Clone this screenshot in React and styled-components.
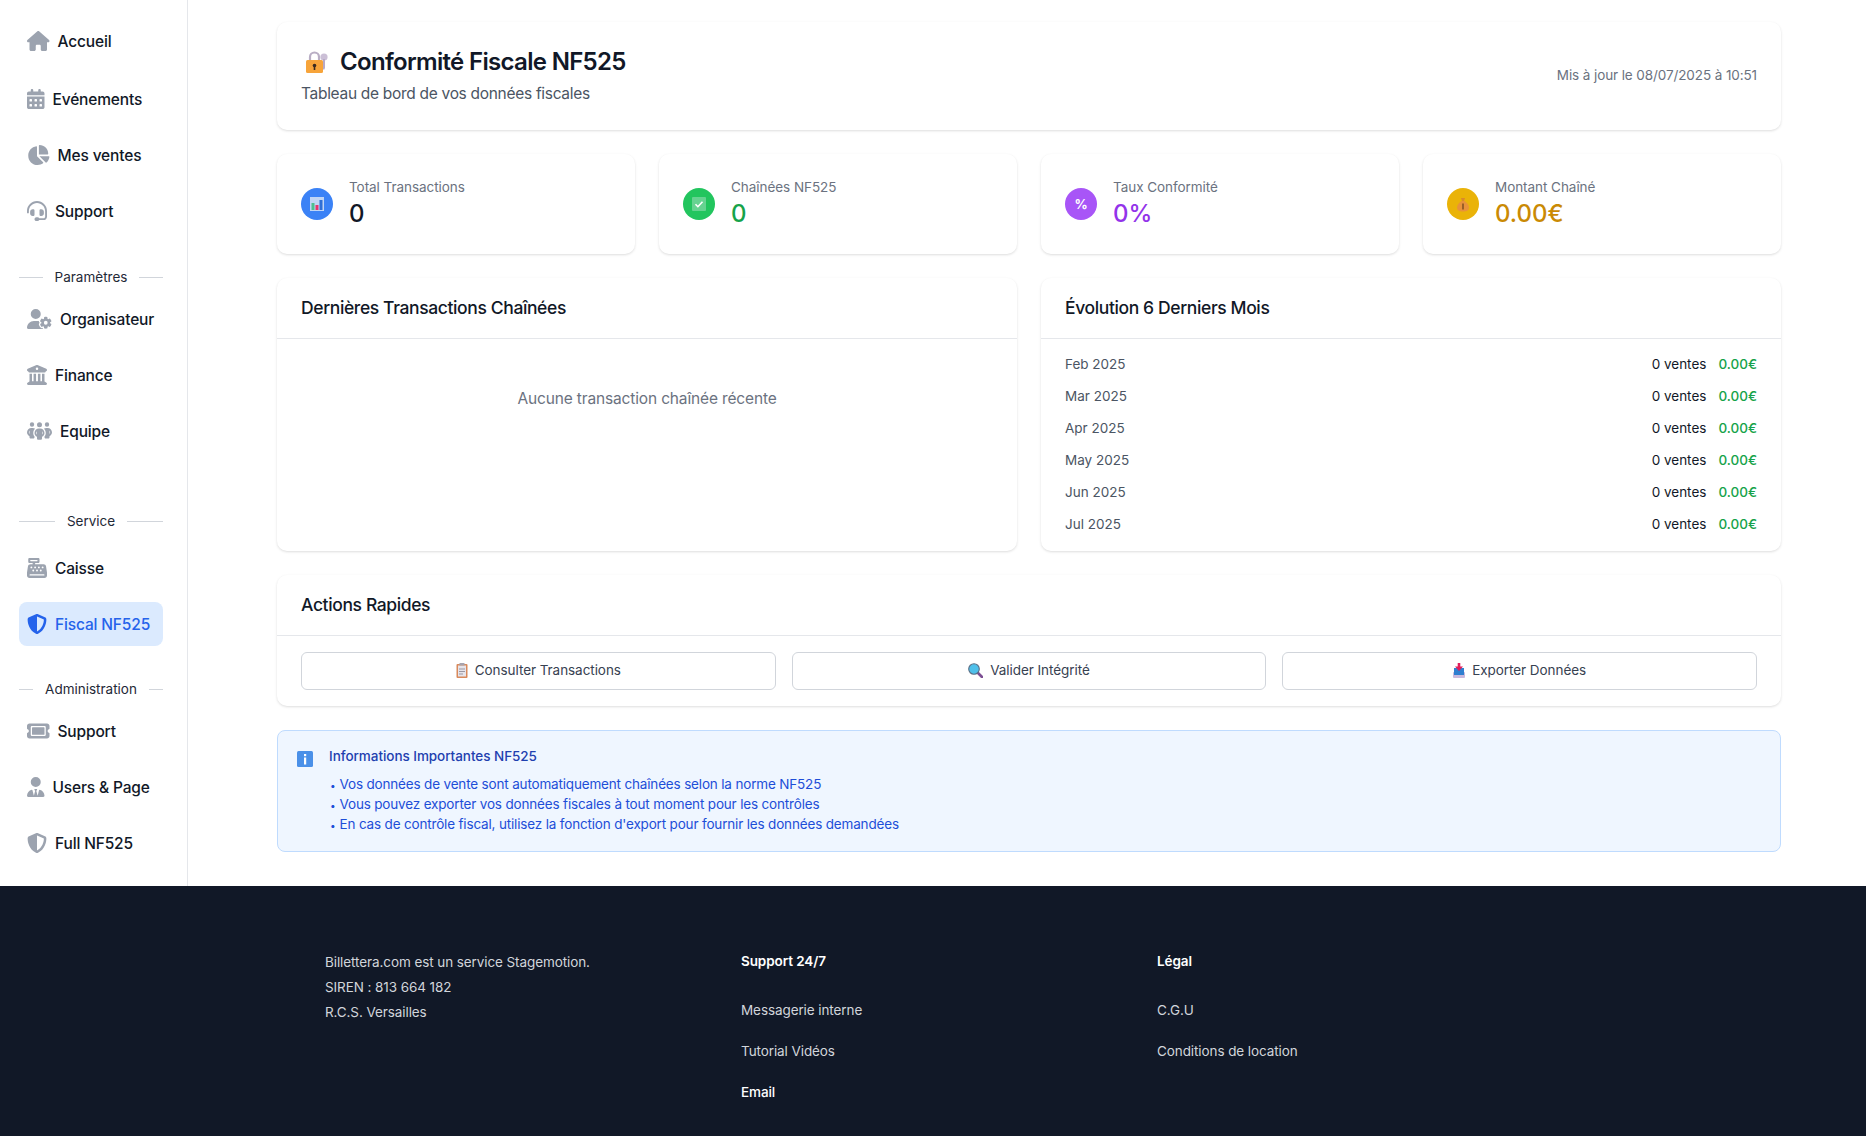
import React from 'react';
import styled, { createGlobalStyle } from 'styled-components';
import {
  FaHouse, FaCalendarDays, FaChartPie, FaHeadset, FaUserGear, FaBuildingColumns, FaPeopleGroup,
  FaCashRegister, FaShieldHalved, FaTicket, FaUserTie,
} from 'react-icons/fa6';

const Global = createGlobalStyle`
  html, body { margin: 0; padding: 0; background: #fff; }
  body { font-family: "Inter", "Noto Sans", sans-serif; color: #111827; }
  * { box-sizing: border-box; }
`;

const Page = styled.div`display: flex; flex-direction: column; min-height: 1136px;`;
const Top = styled.div`display: flex; height: 886px;`;
const Sidebar = styled.aside`
  width: 188px; flex: none; padding: 19px 24px 0 19px; border-right: 1px solid #e5e7eb; background: #fff;
`;
const NavItem = styled.a`
  display: flex; align-items: center; height: 44px; padding: 0 8px; border-radius: 8px;
  margin-bottom: ${p => p.$mb ?? 12}px; font-size: 15.5px; font-weight: 500; letter-spacing: -0.15px;
  color: ${p => p.$active ? '#2563eb' : '#111827'};
  background: ${p => p.$active ? '#dbeafe' : 'transparent'};
`;
const NavIcon = styled.span`
  display: flex; flex: none; width: ${p => p.$w}px; height: 20px; margin-right: 8px;
  color: ${p => p.$active ? '#2563eb' : '#9ca3af'};
  svg { width: 100%; height: 100%; }
`;
const Divider = styled.div`
  display: flex; align-items: center; gap: 12px; font-size: 13.5px; color: #1f2937; height: 20px;
  margin: ${p => p.$m};
  &::before, &::after { content: ''; flex: 1; height: 1px; background: #d1d5db; }
`;
const Main = styled.main`flex: 1; padding: 22px 85px 0 89px; display: flex; flex-direction: column; gap: 24px;`;
const Card = styled.section`
  background: #fff; border-radius: 10px;
  box-shadow: 0 1px 3px rgba(0,0,0,.1), 0 1px 2px rgba(0,0,0,.04);
`;
const HeaderCard = styled(Card)`
  height: 108px; flex: none; display: flex; align-items: center; justify-content: space-between; padding: 0 24px;
`;
const HeaderText = styled.div`padding-bottom: 1px;`;
const TitleRow = styled.h1`
  margin: 0 0 5px; display: flex; align-items: center; gap: 10px; font-size: 24px; font-weight: 600; line-height: 32px; color: #111827;
  letter-spacing: -0.68px;
  svg { margin-left: 3px; }
`;
const Sub = styled.p`margin: 0; font-size: 15.5px; line-height: 22px; color: #4b5563; letter-spacing: -0.3px;`;
const Updated = styled.div`font-size: 13.5px; color: #6b7280; letter-spacing: -0.1px; margin-bottom: 2px;`;
const Stats = styled.div`display: grid; grid-template-columns: repeat(4, 1fr); gap: 24px;`;
const StatCard = styled(Card)`height: 100px; display: flex; align-items: center; padding: 0 24px; gap: 16px;`;
const Round = styled.div`
  width: 32px; height: 32px; border-radius: 50%; background: ${p => p.$c}; flex: none;
  display: flex; align-items: center; justify-content: center; color: #fff; font-size: 13px; font-weight: 700;
`;
const StatLabel = styled.div`font-size: 13.5px; line-height: 20px; color: #6b7280; letter-spacing: -0.05px;`;
const StatValue = styled.div`font-size: 24px; line-height: 34px; font-weight: 500; color: ${p => p.$c};`;
const Panels = styled.div`display: grid; grid-template-columns: 1fr 1fr; gap: 24px;`;
const Panel = styled(Card)`height: ${p => p.$h}px;`;
const PanelHead = styled.h2`
  margin: 0; height: 61px; padding: 0 24px 1px; display: flex; align-items: center; font-size: 17.5px; font-weight: 500;
  border-bottom: 1px solid #e5e7eb; color: #111827; letter-spacing: -0.38px;
`;
const Empty = styled.div`padding-top: 48px; text-align: center; font-size: 15.5px; line-height: 24px; color: #6b7280; letter-spacing: -0.15px;`;
const Rows = styled.div`padding: 9px 24px 0;`;
const Row = styled.div`display: flex; align-items: center; height: 32px; font-size: 13.5px;`;
const Month = styled.span`flex: 1; color: #4b5563;`;
const Sales = styled.span`color: #111827; margin-right: 12px;`;
const Amount = styled.span`color: #16a34a; font-weight: 500;`;
const Actions = styled.div`display: grid; grid-template-columns: repeat(3, 1fr); gap: 16px; padding: 16px 24px;`;
const Btn = styled.button`
  height: 38px; border: 1px solid #d1d5db; border-radius: 6px; background: #fff; font: inherit; font-size: 13.5px; color: #374151;
  letter-spacing: -0.06px; display: flex; align-items: center; justify-content: center; gap: 7px; padding: 0 0 2px;
`;
const Info = styled.section`
  height: 122px; border: 1px solid #bfdbfe; background: #eff6ff; border-radius: 8px; padding: 15px 19px;
  display: flex; gap: 16px;
`;
const InfoTitle = styled.div`font-size: 13.5px; line-height: 20px; font-weight: 500; color: #1e40af; margin-bottom: 8px; letter-spacing: -0.05px;`;
const InfoLine = styled.div`display: flex; align-items: baseline; height: 20px; font-size: 13.5px; line-height: 20px; color: #1d4ed8; letter-spacing: -0.17px;`;
const Bullet = styled.span`flex: none; width: 10.5px; font-size: 10px; padding-left: 1px;`;
const Footer = styled.footer`
  height: 250px; background: #111827; padding: 63px 0 0 325px; display: grid; grid-template-columns: 416px 416px 416px; align-content: start;
  font-size: 13.5px; color: #d1d5db; letter-spacing: -0.09px;
`;
const Company = styled.div`padding-top: 1px;`;
const FootLine = styled.div`line-height: 25px;`;
const FootHead = styled.div`line-height: 25px; margin-bottom: 24px; color: #fff; font-weight: 600;`;
const FootLink = styled.div`line-height: 25px; margin-bottom: 16px; color: ${p => p.$strong ? '#fff' : '#d1d5db'}; font-weight: ${p => p.$strong ? 500 : 400};`;

const Lock = () => (
  <svg width="26" height="26" viewBox="0 0 26 26">
    <circle cx="20" cy="8" r="3.6" fill="#cbbfd6" />
    <path d="M19 10h2v9l-1 2-1-1z" fill="#b7a9c6" />
    <path d="M6 12V8a4.5 4.5 0 0 1 9 0v4" fill="none" stroke="#b9aec4" strokeWidth="2.2" />
    <rect x="2" y="11" width="17" height="13" rx="1.5" fill="#f7a43a" />
    <circle cx="10.5" cy="16.5" r="1.8" fill="#3a2a20" />
    <rect x="9.7" y="17" width="1.6" height="4" fill="#3a2a20" />
  </svg>
);
const ChartEmoji = () => (
  <svg width="14" height="14" viewBox="0 0 14 14">
    <rect width="14" height="14" fill="#eef0f4" opacity=".75" />
    <rect x="1.5" y="6" width="3" height="7" fill="#4fbf8f" />
    <rect x="5.5" y="8" width="3" height="5" fill="#e8336d" />
    <rect x="9.5" y="3" width="3" height="10" fill="#2f6fd6" />
  </svg>
);
const CheckEmoji = () => (
  <svg width="14" height="14" viewBox="0 0 14 14">
    <rect width="14" height="14" rx="1" fill="#66d391" />
    <path d="M3.5 7.3l2.4 2.4 4.6-5" fill="none" stroke="#fff" strokeWidth="1.6" />
  </svg>
);
const BagEmoji = () => (
  <svg width="14" height="15" viewBox="0 0 14 15">
    <path d="M5 1h4l-1 3H6z" fill="#d98a2b" />
    <path d="M5.5 4h3C11 6 13 8 13 10.5 13 13.5 10.5 14.5 7 14.5S1 13.5 1 10.5C1 8 3 6 5.5 4z" fill="#e8923a" />
    <rect x="6.3" y="6.5" width="1.4" height="6" fill="#7a4a1e" />
  </svg>
);
const ClipEmoji = () => (
  <svg width="12" height="15" viewBox="0 0 12 15">
    <rect x=".5" y="1" width="11" height="14" rx="1" fill="#d9895b" />
    <rect x="2" y="2.5" width="8" height="11" fill="#e6e4ea" />
    <rect x="3.5" y="0" width="5" height="2.5" fill="#a7a3ad" />
    <path d="M3 6h6M3 8.5h6M3 11h4" stroke="#9b97a3" strokeWidth="1" />
  </svg>
);
const GlassEmoji = () => (
  <svg width="15" height="15" viewBox="0 0 15 15">
    <path d="M9 9l5 5" stroke="#7c4f93" strokeWidth="2.6" strokeLinecap="round" />
    <circle cx="6" cy="6" r="5.3" fill="#4fc0ea" stroke="#5b6f86" strokeWidth="1.1" />
  </svg>
);
const TrayEmoji = () => (
  <svg width="12" height="15" viewBox="0 0 12 15">
    <rect x="0" y="9" width="12" height="6" rx="1" fill="#c9b9dd" />
    <rect x="1" y="5" width="10" height="7" fill="#2f7fd0" />
    <path d="M4.7 0h2.6v3.5H10L6 8 2 3.5h2.7z" fill="#e11d5b" />
  </svg>
);
const InfoEmojiSvg = styled.svg`flex: none; margin-top: 5px;`;
const InfoEmoji = () => (
  <InfoEmojiSvg width="16" height="16" viewBox="0 0 16 16">
    <rect width="16" height="16" rx="1.5" fill="#4a90e8" />
    <rect x="7" y="3" width="2.2" height="2.2" fill="#fff" />
    <rect x="7" y="6.5" width="2.2" height="7" fill="#fff" />
  </InfoEmojiSvg>
);

const Nav = ({ icon: Icon, w, active, mb, children }) => (
  <NavItem $active={active} $mb={mb}>
    <NavIcon $w={w} $active={active}><Icon /></NavIcon>
    {children}
  </NavItem>
);

const months = ['Feb 2025', 'Mar 2025', 'Apr 2025', 'May 2025', 'Jun 2025', 'Jul 2025'];

export default function App() {
  return (
    <Page>
      <Global />
      <Top>
        <Sidebar>
          <Nav icon={FaHouse} w={22.5} mb={14}>Accueil</Nav>
          <Nav icon={FaCalendarDays} w={17.5}>Evénements</Nav>
          <Nav icon={FaChartPie} w={22.5}>Mes ventes</Nav>
          <Nav icon={FaHeadset} w={20} mb={0}>Support</Nav>
          <Divider $m="34px 0 10px">Paramètres</Divider>
          <Nav icon={FaUserGear} w={25}>Organisateur</Nav>
          <Nav icon={FaBuildingColumns} w={20}>Finance</Nav>
          <Nav icon={FaPeopleGroup} w={25} mb={0}>Equipe</Nav>
          <Divider $m="58px 0 15px">Service</Divider>
          <Nav icon={FaCashRegister} w={20}>Caisse</Nav>
          <Nav icon={FaShieldHalved} w={20} active mb={0}>Fiscal NF525</Nav>
          <Divider $m="33px 0 10px">Administration</Divider>
          <Nav icon={FaTicket} w={22.5}>Support</Nav>
          <Nav icon={FaUserTie} w={17.5}>Users &amp; Page</Nav>
          <Nav icon={FaShieldHalved} w={20} mb={0}>Full NF525</Nav>
        </Sidebar>
        <Main>
          <HeaderCard>
            <HeaderText>
              <TitleRow><Lock />Conformité Fiscale NF525</TitleRow>
              <Sub>Tableau de bord de vos données fiscales</Sub>
            </HeaderText>
            <Updated>Mis à jour le 08/07/2025 à 10:51</Updated>
          </HeaderCard>
          <Stats>
            <StatCard>
              <Round $c="#3b82f6"><ChartEmoji /></Round>
              <div><StatLabel>Total Transactions</StatLabel><StatValue $c="#111827">0</StatValue></div>
            </StatCard>
            <StatCard>
              <Round $c="#22c55e"><CheckEmoji /></Round>
              <div><StatLabel>Chaînées NF525</StatLabel><StatValue $c="#16a34a">0</StatValue></div>
            </StatCard>
            <StatCard>
              <Round $c="#a855f7">%</Round>
              <div><StatLabel>Taux Conformité</StatLabel><StatValue $c="#9333ea">0%</StatValue></div>
            </StatCard>
            <StatCard>
              <Round $c="#eab308"><BagEmoji /></Round>
              <div><StatLabel>Montant Chaîné</StatLabel><StatValue $c="#ca8a04">0.00€</StatValue></div>
            </StatCard>
          </Stats>
          <Panels>
            <Panel $h={273}>
              <PanelHead>Dernières Transactions Chaînées</PanelHead>
              <Empty>Aucune transaction chaînée récente</Empty>
            </Panel>
            <Panel $h={273}>
              <PanelHead>Évolution 6 Derniers Mois</PanelHead>
              <Rows>
                {months.map(m => (
                  <Row key={m}><Month>{m}</Month><Sales>0 ventes</Sales><Amount>0.00€</Amount></Row>
                ))}
              </Rows>
            </Panel>
          </Panels>
          <Panel $h={131}>
            <PanelHead>Actions Rapides</PanelHead>
            <Actions>
              <Btn><ClipEmoji />Consulter Transactions</Btn>
              <Btn><GlassEmoji />Valider Intégrité</Btn>
              <Btn><TrayEmoji />Exporter Données</Btn>
            </Actions>
          </Panel>
          <Info>
            <InfoEmoji />
            <div>
              <InfoTitle>Informations Importantes NF525</InfoTitle>
              <InfoLine><Bullet>•</Bullet>Vos données de vente sont automatiquement chaînées selon la norme NF525</InfoLine>
              <InfoLine><Bullet>•</Bullet>Vous pouvez exporter vos données fiscales à tout moment pour les contrôles</InfoLine>
              <InfoLine><Bullet>•</Bullet>En cas de contrôle fiscal, utilisez la fonction d'export pour fournir les données demandées</InfoLine>
            </div>
          </Info>
        </Main>
      </Top>
      <Footer>
        <Company>
          <FootLine>Billettera.com est un service Stagemotion.</FootLine>
          <FootLine>SIREN : 813 664 182</FootLine>
          <FootLine>R.C.S. Versailles</FootLine>
        </Company>
        <div>
          <FootHead>Support 24/7</FootHead>
          <FootLink>Messagerie interne</FootLink>
          <FootLink>Tutorial Vidéos</FootLink>
          <FootLink $strong>Email</FootLink>
        </div>
        <div>
          <FootHead>Légal</FootHead>
          <FootLink>C.G.U</FootLink>
          <FootLink>Conditions de location</FootLink>
        </div>
      </Footer>
    </Page>
  );
}
